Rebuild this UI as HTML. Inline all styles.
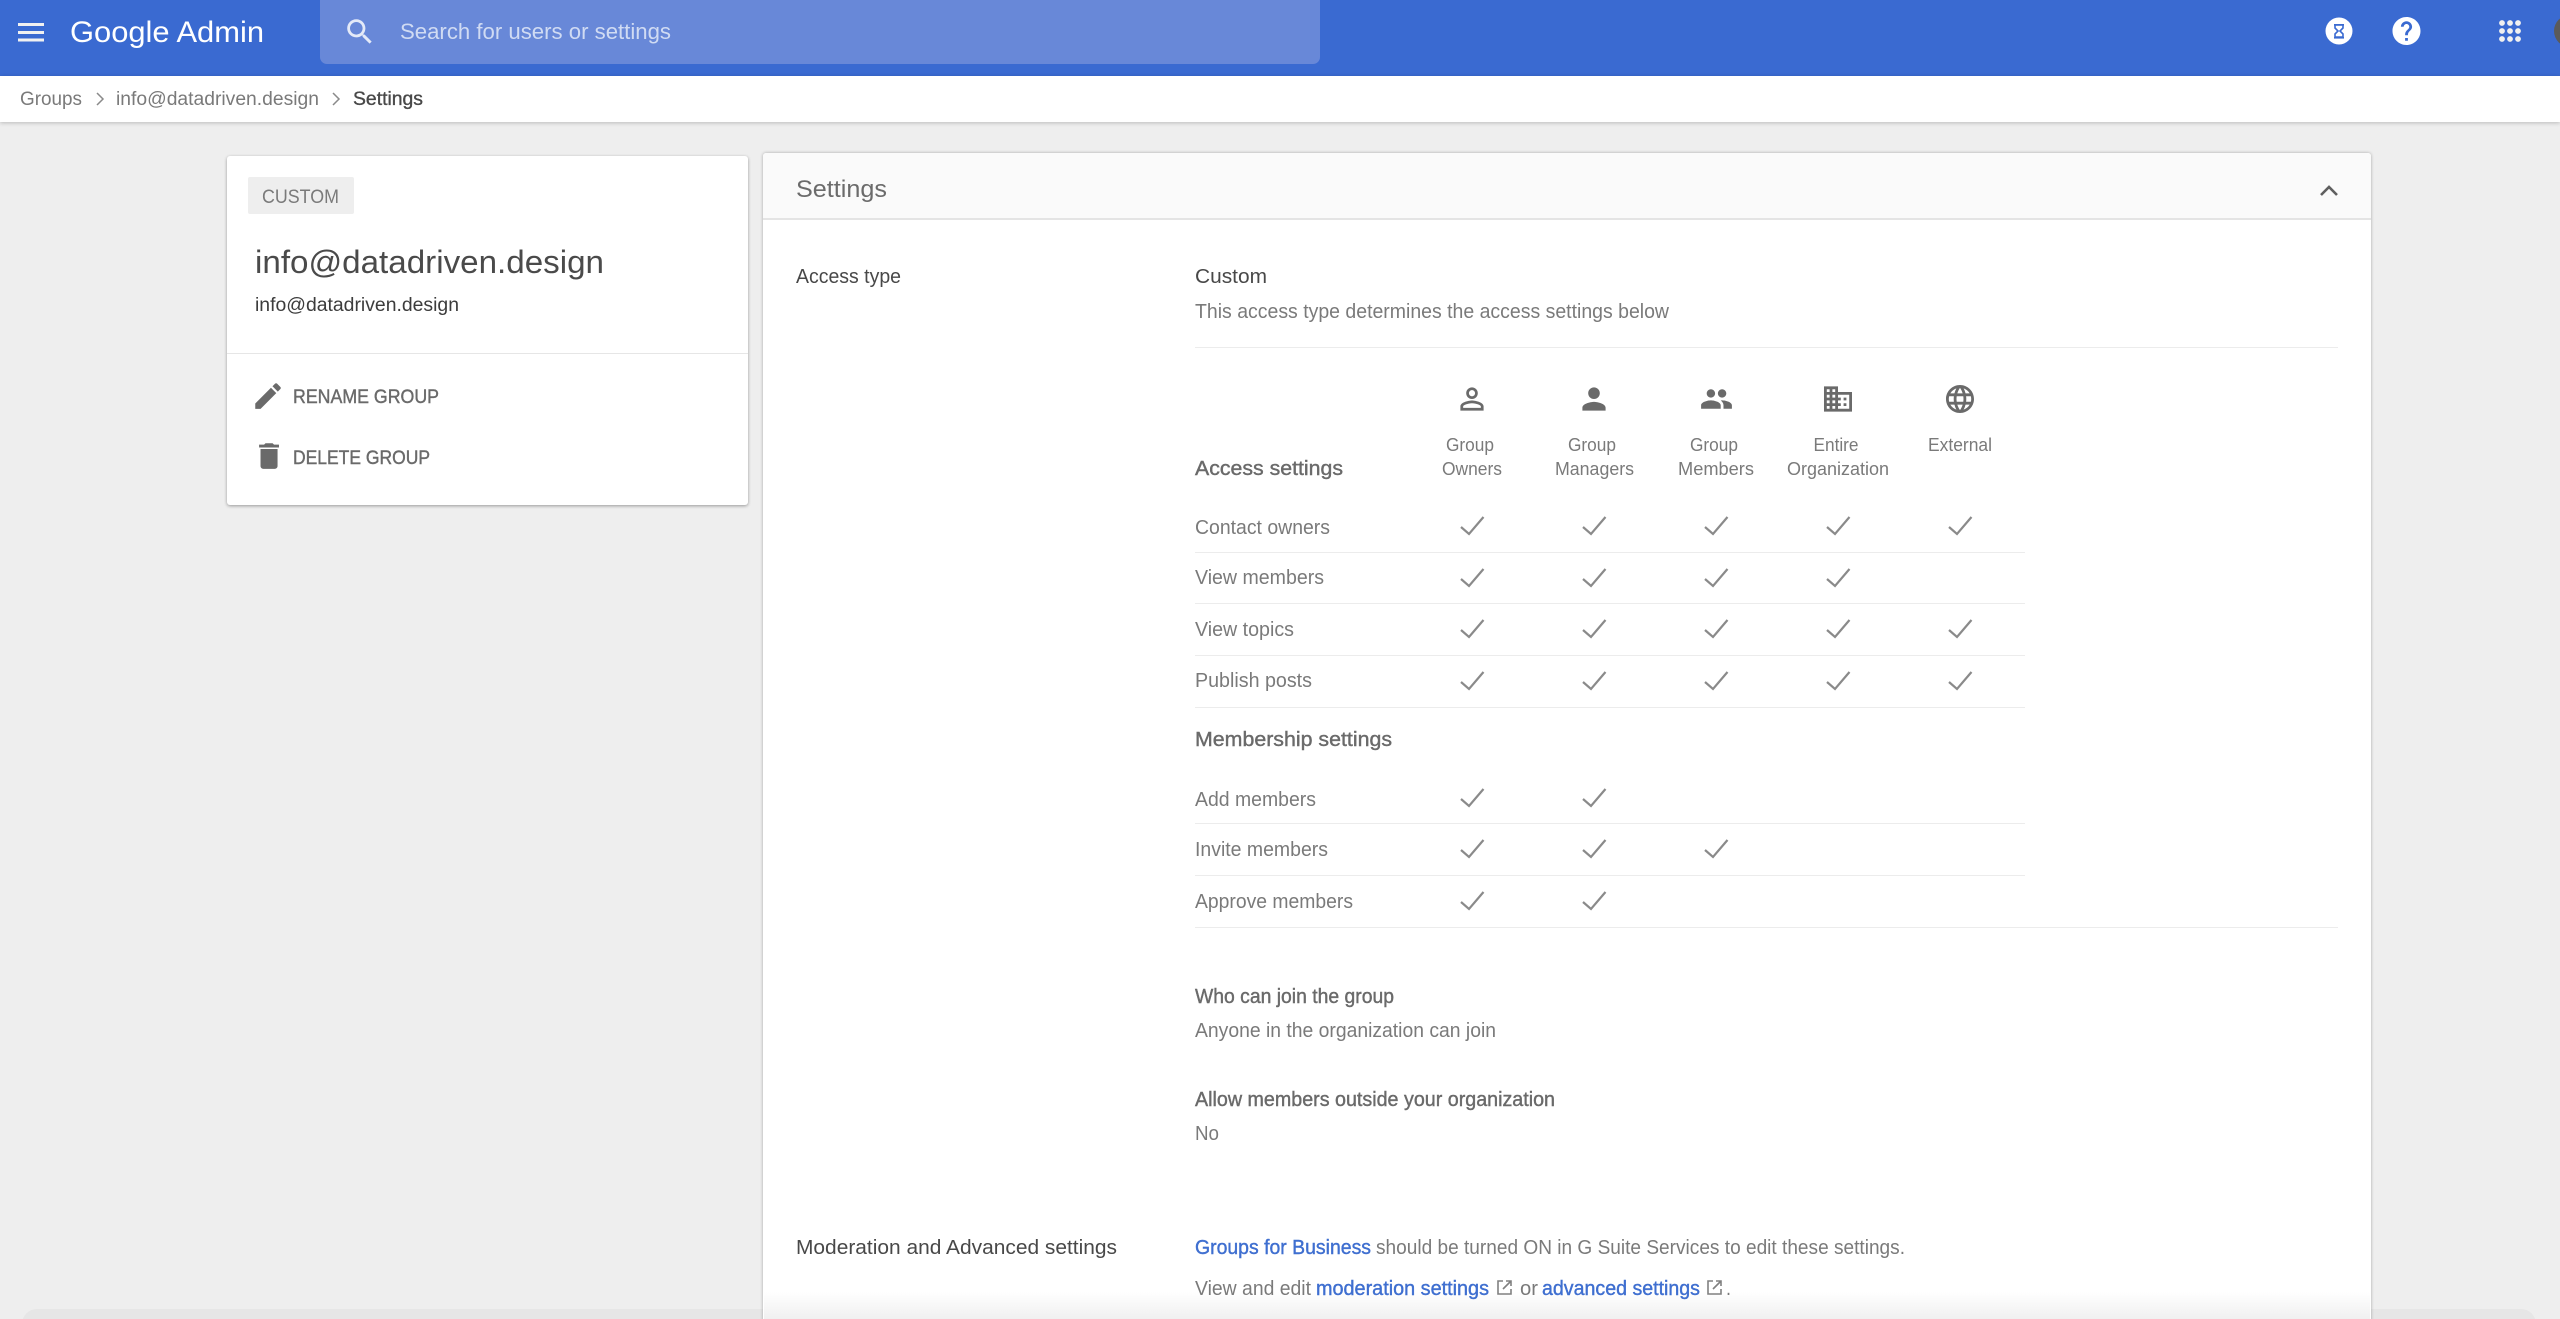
<!DOCTYPE html>
<html lang="en"><head><meta charset="utf-8"><title>Google Admin - Settings</title>
<style>
html,body{margin:0;padding:0;width:2560px;height:1319px;overflow:hidden;background:#eeeeee;font-family:"Liberation Sans",sans-serif}
#p{position:relative;width:2560px;height:1319px;overflow:hidden;background:#eeeeee}
.a{position:absolute}
svg{position:absolute;left:0;top:0;filter:blur(.35px)}
text{font-family:"Liberation Sans",sans-serif;font-size:20px;fill:#7a7a7a}
.d{fill:#484848}.m{fill:#6a6a6a;stroke:#6a6a6a;stroke-width:.4px}.w{fill:#fff}.l{fill:#3f6fd0;stroke:#3f6fd0;stroke-width:.4px}
.i{fill:#6a6a6a}
</style></head><body><div id="p">
<div class="a" style="left:22px;top:1309px;width:2514px;height:30px;background:#e6e6e6;border-radius:16px"></div>
<div class="a" style="left:0;top:0;width:2560px;height:76px;background:#3a6ad1"></div>
<div class="a" style="left:320px;top:0;width:1000px;height:64px;background:#6888d8;border-radius:0 0 7px 7px"></div>
<div class="a" style="left:0;top:76px;width:2560px;height:46px;background:#fff;box-shadow:0 1px 4px rgba(0,0,0,.22)"></div>
<div class="a" style="left:227px;top:156px;width:521px;height:349px;background:#fff;border-radius:3px;box-shadow:0 1px 3px rgba(0,0,0,.36)"></div>
<div class="a" style="left:248px;top:177px;width:106px;height:37px;background:#eeeeee;border-radius:2px"></div>
<div class="a" style="left:227px;top:353px;width:521px;height:1px;background:#e6e6e6"></div>
<div class="a" style="left:763px;top:153px;width:1608px;height:1180px;background:#fff;border-radius:3px;box-shadow:0 0 3px rgba(0,0,0,.3)"></div>
<div class="a" style="left:763px;top:153px;width:1608px;height:65px;background:#fafafa;border-bottom:2px solid #e4e4e4;border-radius:3px 3px 0 0"></div>
<div class="a" style="left:764px;top:1292px;width:1606px;height:27px;background:linear-gradient(#fff,#f0f0f0)"></div>
<div class="a" style="left:1195px;top:347px;width:1143px;height:1px;background:#ececec"></div>
<div class="a" style="left:1195px;top:552px;width:830px;height:1px;background:#ececec"></div>
<div class="a" style="left:1195px;top:603px;width:830px;height:1px;background:#ececec"></div>
<div class="a" style="left:1195px;top:655px;width:830px;height:1px;background:#ececec"></div>
<div class="a" style="left:1195px;top:707px;width:830px;height:1px;background:#ececec"></div>
<div class="a" style="left:1195px;top:823px;width:830px;height:1px;background:#ececec"></div>
<div class="a" style="left:1195px;top:875px;width:830px;height:1px;background:#ececec"></div>
<div class="a" style="left:1195px;top:927px;width:1143px;height:1px;background:#ececec"></div>

<svg width="2560" height="1319" viewBox="0 0 2560 1319" xmlns="http://www.w3.org/2000/svg">
<defs>
<path id="ck" d="M-11 2 L-3 9 L11.5 -8" fill="none" stroke="#8a8a8a" stroke-width="2.2"/>
<path id="ext" d="M6 1H1v13h13V9M9 1h5v5M14 1L6 9" fill="none" stroke="#808080" stroke-width="1.6"/>
</defs>

<!-- top bar -->
<rect x="18" y="23" width="26" height="3" fill="#f1f1f1"/><rect x="18" y="31" width="26" height="3" fill="#f1f1f1"/><rect x="18" y="38.5" width="26" height="3" fill="#f1f1f1"/>
<text x="70" y="42" class="w" style="font-size:30px" textLength="194" lengthAdjust="spacingAndGlyphs">Google Admin</text>
<path transform="translate(343 15) scale(1.4)" fill="#e4eaf8" d="M15.5 14h-.79l-.28-.27C15.41 12.59 16 11.11 16 9.5 16 5.91 13.09 3 9.5 3S3 5.91 3 9.5 5.91 16 9.5 16c1.61 0 3.09-.59 4.23-1.57l.27.28v.79l5 4.99L20.49 19l-4.99-5zm-6 0C7.01 14 5 11.99 5 9.5S7.01 5 9.5 5 14 7.01 14 9.5 11.99 14 9.5 14z"/>
<text x="400" y="39" style="font-size:22px;fill:#d0dbf3" textLength="271" lengthAdjust="spacingAndGlyphs">Search for users or settings</text>
<circle cx="2339" cy="31" r="13.5" fill="#fff"/>
<path d="M2335 25h8v3l-3 3 3 3v3h-8v-3l3-3-3-3z" fill="none" stroke="#3a6ad1" stroke-width="1.6"/><rect x="2334" y="24" width="10" height="1.6" fill="#3a6ad1"/><rect x="2334" y="37" width="10" height="1.6" fill="#3a6ad1"/>
<path transform="translate(2389.7 14.2) scale(1.4)" fill="#fff" d="M12 2C6.48 2 2 6.48 2 12s4.48 10 10 10 10-4.48 10-10S17.52 2 12 2zm1 17h-2v-2h2v2zm2.07-7.75l-.9.92C13.45 12.9 13 13.5 13 15h-2v-.5c0-1.1.45-2.1 1.17-2.83l1.24-1.26c.37-.36.59-.86.59-1.41 0-1.1-.9-2-2-2s-2 .9-2 2H8c0-2.21 1.79-4 4-4s4 1.79 4 4c0 .88-.36 1.68-.93 2.25z"/>
<g fill="#f0f0f0"><circle cx="2502" cy="23" r="2.9"/><circle cx="2510" cy="23" r="2.9"/><circle cx="2518" cy="23" r="2.9"/><circle cx="2502" cy="31" r="2.9"/><circle cx="2510" cy="31" r="2.9"/><circle cx="2518" cy="31" r="2.9"/><circle cx="2502" cy="39" r="2.9"/><circle cx="2510" cy="39" r="2.9"/><circle cx="2518" cy="39" r="2.9"/></g>
<circle cx="2570" cy="31" r="16" fill="#5a5a5a"/>

<!-- breadcrumbs -->
<text x="20" y="105" style="font-size:19px" textLength="62" lengthAdjust="spacingAndGlyphs">Groups</text>
<path d="M97 93l6 6-6 6" fill="none" stroke="#8a8a8a" stroke-width="1.5"/>
<text x="116" y="105" style="font-size:19px" textLength="203" lengthAdjust="spacingAndGlyphs">info@datadriven.design</text>
<path d="M333 93l6 6-6 6" fill="none" stroke="#8a8a8a" stroke-width="1.5"/>
<text x="353" y="105" style="font-size:19px;fill:#484848;stroke:#484848;stroke-width:.35px" textLength="70" lengthAdjust="spacingAndGlyphs">Settings</text>

<!-- left card -->
<text x="262" y="203" style="font-size:19px" textLength="77" lengthAdjust="spacingAndGlyphs">CUSTOM</text>
<text x="255" y="273" class="d" style="font-size:32px;fill:#4a4a4a" textLength="349" lengthAdjust="spacingAndGlyphs">info@datadriven.design</text>
<text x="255" y="311" class="d" style="font-size:19px;fill:#3c3c3c" textLength="204" lengthAdjust="spacingAndGlyphs">info@datadriven.design</text>
<path class="i" transform="translate(251 379) scale(1.42)" d="M3 17.25V21h3.75L17.81 9.94l-3.75-3.75L3 17.25zM20.71 7.04c.39-.39.39-1.02 0-1.41l-2.34-2.34c-.39-.39-1.02-.39-1.41 0l-1.83 1.83 3.75 3.75 1.83-1.83z"/>
<text x="293" y="403" class="m" style="font-size:19px" textLength="146" lengthAdjust="spacingAndGlyphs">RENAME GROUP</text>
<path class="i" transform="translate(252 439) scale(1.42)" d="M6 19c0 1.1.9 2 2 2h8c1.1 0 2-.9 2-2V7H6v12zM19 4h-3.5l-1-1h-5l-1 1H5v2h14V4z"/>
<text x="293" y="464" class="m" style="font-size:19px" textLength="137" lengthAdjust="spacingAndGlyphs">DELETE GROUP</text>

<!-- panel head -->
<text x="796" y="197" style="font-size:24px;fill:#6b6b6b" textLength="91" lengthAdjust="spacingAndGlyphs">Settings</text>
<path d="M2321 195l8-8 8 8" fill="none" stroke="#5f5f5f" stroke-width="2.6"/>

<!-- body -->
<text x="796" y="283" class="d" textLength="105" lengthAdjust="spacingAndGlyphs">Access type</text>
<text x="1195" y="283" class="d" textLength="72" lengthAdjust="spacingAndGlyphs">Custom</text>
<text x="1195" y="318" textLength="474" lengthAdjust="spacingAndGlyphs">This access type determines the access settings below</text>

<!-- column icons -->
<path class="i" transform="translate(1454.6 381.6) scale(1.45)" d="M12 5.9c1.16 0 2.1.94 2.1 2.1s-.94 2.1-2.1 2.1S9.9 9.16 9.9 8s.94-2.1 2.1-2.1m0 9c2.97 0 6.1 1.46 6.1 2.1v1.1H5.9V17c0-.64 3.13-2.1 6.1-2.1M12 4C9.79 4 8 5.79 8 8s1.79 4 4 4 4-1.79 4-4-1.79-4-4-4zm0 9c-2.67 0-8 1.34-8 4v3h16v-3c0-2.66-5.33-4-8-4z"/>
<path class="i" transform="translate(1576.6 381.6) scale(1.45)" d="M12 12c2.21 0 4-1.79 4-4s-1.79-4-4-4-4 1.79-4 4 1.79 4 4 4zm0 2c-2.67 0-8 1.34-8 4v2h16v-2c0-2.66-5.33-4-8-4z"/>
<path class="i" transform="translate(1699.7 382.2) scale(1.4)" d="M16 11c1.66 0 2.99-1.34 2.99-3S17.66 5 16 5c-1.66 0-3 1.34-3 3s1.34 3 3 3zm-8 0c1.66 0 2.99-1.34 2.99-3S9.66 5 8 5C6.34 5 5 6.34 5 8s1.34 3 3 3zm0 2c-2.33 0-7 1.17-7 3.5V19h14v-2.5c0-2.33-4.67-3.5-7-3.5zm8 0c-.29 0-.62.02-.97.05 1.16.84 1.97 1.97 1.97 3.45V19h6v-2.5c0-2.33-4.67-3.5-7-3.5z"/>
<path class="i" transform="translate(1821.2 382.2) scale(1.4)" d="M12 7V3H2v18h20V7H12zM6 19H4v-2h2v2zm0-4H4v-2h2v2zm0-4H4V9h2v2zm0-4H4V5h2v2zm4 12H8v-2h2v2zm0-4H8v-2h2v2zm0-4H8V9h2v2zm0-4H8V5h2v2zm10 12h-8v-2h2v-2h-2v-2h2v-2h-2V9h8v10zm-2-8h-2v2h2v-2zm0 4h-2v2h2v-2z"/>
<path class="i" transform="translate(1943.2 382.2) scale(1.4)" d="M11.99 2C6.47 2 2 6.48 2 12s4.47 10 9.99 10C17.52 22 22 17.52 22 12S17.52 2 11.99 2zm6.93 6h-2.95c-.32-1.25-.78-2.45-1.38-3.56 1.84.63 3.37 1.91 4.33 3.56zM12 4.04c.83 1.2 1.48 2.53 1.91 3.96h-3.82c.43-1.43 1.08-2.76 1.91-3.96zM4.26 14C4.1 13.36 4 12.69 4 12s.1-1.36.26-2h3.38c-.08.66-.14 1.32-.14 2 0 .68.06 1.34.14 2H4.26zm.82 2h2.95c.32 1.25.78 2.45 1.38 3.56-1.84-.63-3.37-1.9-4.33-3.56zm2.95-8H5.08c.96-1.66 2.49-2.93 4.33-3.56C8.81 5.55 8.35 6.75 8.03 8zM12 19.96c-.83-1.2-1.48-2.53-1.91-3.96h3.82c-.43 1.43-1.08 2.76-1.91 3.96zM14.34 14H9.66c-.09-.66-.16-1.32-.16-2 0-.68.07-1.35.16-2h4.68c.09.65.16 1.32.16 2 0 .68-.07 1.34-.16 2zm.25 5.56c.6-1.11 1.06-2.31 1.38-3.56h2.95c-.96 1.65-2.49 2.93-4.33 3.56zM16.36 14c.08-.66.14-1.32.14-2 0-.68-.06-1.34-.14-2h3.38c.16.64.26 1.31.26 2s-.1 1.36-.26 2h-3.38z"/>

<!-- column labels -->
<text x="1446" y="451" style="font-size:18px" textLength="48" lengthAdjust="spacingAndGlyphs">Group</text>
<text x="1442" y="475" style="font-size:18px" textLength="60" lengthAdjust="spacingAndGlyphs">Owners</text>
<text x="1568" y="451" style="font-size:18px" textLength="48" lengthAdjust="spacingAndGlyphs">Group</text>
<text x="1555" y="475" style="font-size:18px" textLength="79" lengthAdjust="spacingAndGlyphs">Managers</text>
<text x="1690" y="451" style="font-size:18px" textLength="48" lengthAdjust="spacingAndGlyphs">Group</text>
<text x="1678" y="475" style="font-size:18px" textLength="76" lengthAdjust="spacingAndGlyphs">Members</text>
<text x="1813.5" y="451" style="font-size:18px" textLength="45" lengthAdjust="spacingAndGlyphs">Entire</text>
<text x="1787" y="475" style="font-size:18px" textLength="102" lengthAdjust="spacingAndGlyphs">Organization</text>
<text x="1928" y="451" style="font-size:18px" textLength="64" lengthAdjust="spacingAndGlyphs">External</text>

<text x="1195" y="475" class="m" textLength="148" lengthAdjust="spacingAndGlyphs">Access settings</text>
<text x="1195" y="534" textLength="135" lengthAdjust="spacingAndGlyphs">Contact owners</text>
<text x="1195" y="584" textLength="129" lengthAdjust="spacingAndGlyphs">View members</text>
<text x="1195" y="636" textLength="99" lengthAdjust="spacingAndGlyphs">View topics</text>
<text x="1195" y="687" textLength="117" lengthAdjust="spacingAndGlyphs">Publish posts</text>
<text x="1195" y="746" class="m" textLength="197" lengthAdjust="spacingAndGlyphs">Membership settings</text>
<text x="1195" y="806" textLength="121" lengthAdjust="spacingAndGlyphs">Add members</text>
<text x="1195" y="856" textLength="133" lengthAdjust="spacingAndGlyphs">Invite members</text>
<text x="1195" y="908" textLength="158" lengthAdjust="spacingAndGlyphs">Approve members</text>

<!-- checks -->
<use href="#ck" x="1472" y="525"/><use href="#ck" x="1594" y="525"/><use href="#ck" x="1716" y="525"/><use href="#ck" x="1838" y="525"/><use href="#ck" x="1960" y="525"/>
<use href="#ck" x="1472" y="577"/><use href="#ck" x="1594" y="577"/><use href="#ck" x="1716" y="577"/><use href="#ck" x="1838" y="577"/>
<use href="#ck" x="1472" y="628"/><use href="#ck" x="1594" y="628"/><use href="#ck" x="1716" y="628"/><use href="#ck" x="1838" y="628"/><use href="#ck" x="1960" y="628"/>
<use href="#ck" x="1472" y="680"/><use href="#ck" x="1594" y="680"/><use href="#ck" x="1716" y="680"/><use href="#ck" x="1838" y="680"/><use href="#ck" x="1960" y="680"/>
<use href="#ck" x="1472" y="797"/><use href="#ck" x="1594" y="797"/>
<use href="#ck" x="1472" y="848"/><use href="#ck" x="1594" y="848"/><use href="#ck" x="1716" y="848"/>
<use href="#ck" x="1472" y="900"/><use href="#ck" x="1594" y="900"/>

<text x="1195" y="1003" class="m" textLength="199" lengthAdjust="spacingAndGlyphs">Who can join the group</text>
<text x="1195" y="1037" textLength="301" lengthAdjust="spacingAndGlyphs">Anyone in the organization can join</text>
<text x="1195" y="1106" class="m" textLength="360" lengthAdjust="spacingAndGlyphs">Allow members outside your organization</text>
<text x="1195" y="1140" textLength="24" lengthAdjust="spacingAndGlyphs">No</text>

<text x="796" y="1254" class="d" textLength="321" lengthAdjust="spacingAndGlyphs">Moderation and Advanced settings</text>
<text x="1195" y="1254" class="l" textLength="176" lengthAdjust="spacingAndGlyphs">Groups for Business</text>
<text x="1376" y="1254" textLength="529" lengthAdjust="spacingAndGlyphs">should be turned ON in G Suite Services to edit these settings.</text>
<text x="1195" y="1295" textLength="116" lengthAdjust="spacingAndGlyphs">View and edit</text>
<text x="1316" y="1295" class="l" textLength="173" lengthAdjust="spacingAndGlyphs">moderation settings</text>
<use href="#ext" x="1497" y="1280"/>
<text x="1520" y="1295" textLength="18" lengthAdjust="spacingAndGlyphs">or</text>
<text x="1542" y="1295" class="l" textLength="158" lengthAdjust="spacingAndGlyphs">advanced settings</text>
<use href="#ext" x="1707" y="1280"/>
<text x="1726" y="1295" textLength="5" lengthAdjust="spacingAndGlyphs">.</text>
</svg>
</div></body></html>
